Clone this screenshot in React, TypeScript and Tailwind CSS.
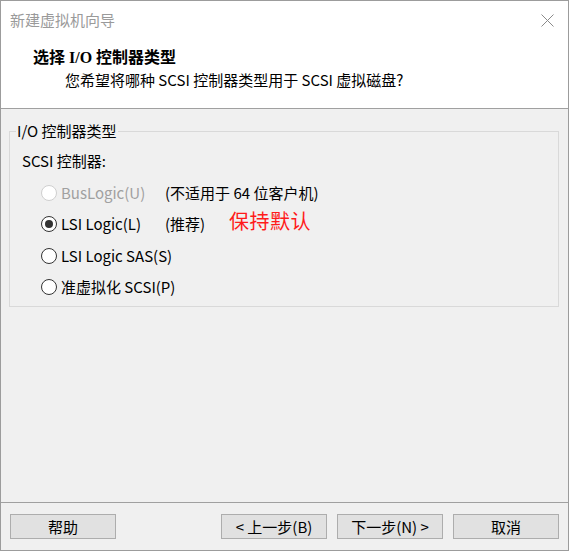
import React from "react";

const Radio = ({ checked, disabled }: { checked?: boolean; disabled?: boolean }) => (
  <span
    className={
      "flex items-center justify-center w-[16px] h-[16px] rounded-full border bg-white shrink-0 " +
      (disabled ? "border-[#cfcfcf]" : "border-[#333333]")
    }
  >
    {checked && <span className="w-[8px] h-[8px] rounded-full bg-[#333333]" />}
  </span>
);

const Row = ({
  label,
  note,
  checked,
  disabled,
  extra,
}: {
  label: string;
  note?: string;
  checked?: boolean;
  disabled?: boolean;
  extra?: string;
}) => (
  <div className="flex items-center h-[31.5px] pl-[31px]">
    <div className="flex items-center w-[124px] shrink-0">
      <Radio checked={checked} disabled={disabled} />
      <span className={"ml-[4px] whitespace-nowrap " + (disabled ? "text-[#a0a0a0]" : "text-black")}>{label}</span>
    </div>
    {note && <span className="w-[64px] whitespace-nowrap text-black">{note}</span>}
    {extra && (
      <span className="text-[20px] leading-[22px] text-[#ff1a1a] mt-[-6px] tracking-[0.5px]">{extra}</span>
    )}
  </div>
);

const Btn = ({ children }: { children: React.ReactNode }) => (
  <button className="w-[106px] h-[25px] bg-[#e1e1e1] border border-[#adadad] text-[15px] leading-[23px] text-black flex items-center justify-center">
    {children}
  </button>
);

export default function App() {
  return (
    <div
      className="w-[569px] h-[551px] bg-[#f0f0f0] border border-[#9c9c9c] flex flex-col text-[15px] leading-[22px] text-black"
      style={{ fontFamily: '"Noto Sans CJK SC", "Noto Sans", sans-serif' }}
    >
      <div className="h-[108px] bg-white border-b border-[#a0a0a0] shrink-0 flex flex-col">
        <div className="h-[38px] flex items-center justify-between pl-[9px] pr-[14px]">
          <span className="text-[#9a9a9a] text-[15px]">新建虚拟机向导</span>
          <svg width="13" height="13" viewBox="0 0 13 13">
            <path d="M0.5 0.5 L12.5 12.5 M12.5 0.5 L0.5 12.5" stroke="#8a8a8a" strokeWidth="1" fill="none" />
          </svg>
        </div>
        <div
          className="mt-[8px] pl-[32px] font-bold text-[16px] leading-[22px]"
          style={{ fontFamily: '"Liberation Serif", "Noto Sans CJK SC", serif' }}
        >
          选择 I/O 控制器类型
        </div>
        <div className="pl-[64px] text-[15px] leading-[22px]">您希望将哪种 SCSI 控制器类型用于 SCSI 虚拟磁盘?</div>
      </div>

      <div className="flex-1 pt-[11px] pl-[8px] pr-[9px]">
        <fieldset className="border border-[#d9d9d9] pb-[3px]">
          <legend className="ml-[6px] px-[1px] leading-[22px]">I/O 控制器类型</legend>
          <div className="pt-[8px] pl-[12px]">SCSI 控制器:</div>
          <div className="mt-[5px] flex flex-col">
            <Row label="BusLogic(U)" note="(不适用于 64 位客户机)" disabled />
            <Row label="LSI Logic(L)" note="(推荐)" checked extra="保持默认" />
            <Row label="LSI Logic SAS(S)" />
            <Row label="准虚拟化 SCSI(P)" />
          </div>
        </fieldset>
      </div>

      <div className="h-[48px] border-t border-[#a0a0a0] shrink-0 flex items-center px-[9px]">
        <Btn>帮助</Btn>
        <div className="flex-1" />
        <div className="flex gap-[10px]">
          <Btn>&lt; 上一步(B)</Btn>
          <Btn>下一步(N) &gt;</Btn>
          <Btn>取消</Btn>
        </div>
      </div>
    </div>
  );
}
